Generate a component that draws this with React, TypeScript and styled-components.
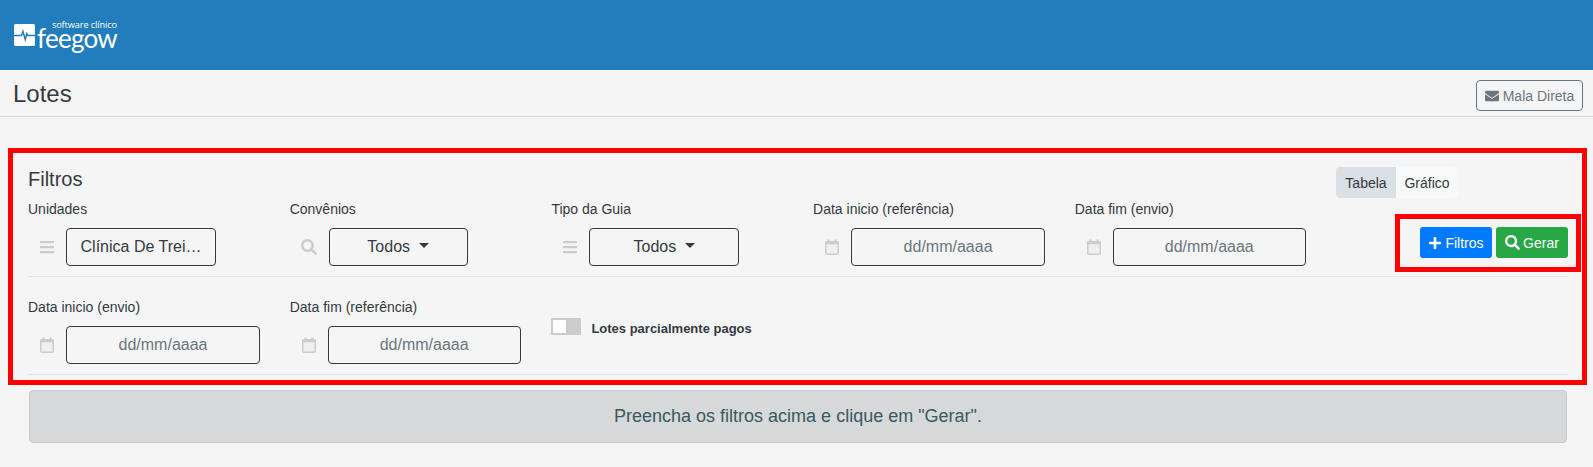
import React from "react";
import styled, { createGlobalStyle } from "styled-components";
import { FaBars, FaSearch, FaPlus, FaEnvelope } from "react-icons/fa";

const Global = createGlobalStyle`
  html, body { margin: 0; padding: 0; background: #f5f5f5; }
  body { font-family: "Liberation Sans", Arial, sans-serif; color: #343a40; overflow: hidden; }
  * { box-sizing: border-box; }
`;

const Page = styled.div`
  position: relative;
  height: 467px;
  background: #f5f5f5;
`;
const TopBar = styled.header`
  height: 70px;
  background: #217dbb;
  display: flex;
  align-items: flex-start;
  padding: 21px 0 0 14px;
`;
const Logo = styled.div`
  display: flex;
  align-items: flex-start;
  gap: 4px;
  color: #fff;
`;
const LogoMarkSlot = styled.div`
  margin-top: 3px;
  line-height: 0;
`;
const LogoWords = styled.div`
  display: flex;
  flex-direction: column;
  align-items: flex-end;
  width: 78px;
`;
const LogoSmall = styled.span`
  font-family: "Open Sans", sans-serif;
  font-size: 9.2px;
  line-height: 8px;
  height: 8px;
  letter-spacing: -0.1px;
  white-space: nowrap;
`;
const LogoBig = styled.span`
  font-family: "Lato", sans-serif;
  font-size: 26px;
  font-weight: 400;
  line-height: 12px;
  height: 12px;
  margin-top: 3px;
  letter-spacing: -0.75px;
  white-space: nowrap;
`;
const TitleBar = styled.div`
  height: 47px;
  border-bottom: 1px solid #dcdcdc;
  display: flex;
  align-items: center;
  justify-content: space-between;
  padding: 0 10px 0 13px;
`;
const Title = styled.h1`
  margin: 2px 0 0;
  font-size: 24px;
  font-weight: 400;
  color: #343a40;
`;
const OutlineButton = styled.button`
  height: 31px;
  width: 107px;
  border: 1px solid #6c757d;
  border-radius: 4px;
  background: transparent;
  color: #6c757d;
  font: 14px "Liberation Sans", Arial, sans-serif;
  display: flex;
  align-items: center;
  justify-content: center;
  gap: 4px;
  padding: 0;
  margin-top: 5px;
`;
const Main = styled.main`
  padding: 50px 25px 0 28px;
`;
const HeadRow = styled.div`
  display: flex;
  justify-content: space-between;
  align-items: flex-start;
  height: 32px;
`;
const Heading = styled.h2`
  margin: 0;
  font-size: 20px;
  line-height: 24px;
  font-weight: 400;
  color: #343a40;
`;
const Tabs = styled.div`
  display: flex;
  margin-right: 110px;
`;
const Tab = styled.div<{ $active?: boolean }>`
  width: ${(p) => (p.$active ? "60px" : "62px")};
  height: 31px;
  display: flex;
  align-items: center;
  justify-content: center;
  font-size: 14px;
  color: #343a40;
  background: ${(p) => (p.$active ? "#dae0e5" : "#f8f9fa")};
  border-radius: ${(p) => (p.$active ? "4px 0 0 4px" : "0 4px 4px 0")};
`;
const FilterRow = styled.div`
  display: flex;
  height: 78px;
  border-bottom: 1px solid #e2e3e8;
  margin-bottom: 20px;
`;
const Field = styled.div`
  width: 261.7px;
  flex: none;
`;
const Label = styled.label`
  display: block;
  font-size: 14px;
  line-height: 21px;
  margin-bottom: 8px;
  color: #343a40;
`;
const Control = styled.div`
  display: flex;
  align-items: center;
`;
const Addon = styled.span`
  width: 38px;
  flex: none;
  display: flex;
  justify-content: center;
  color: #ccc;
  font-size: 16px;
`;
const Box = styled.div<{ $width: number; $muted?: boolean; $shift?: number }>`
  width: ${(p) => p.$width}px;
  margin-left: ${(p) => p.$shift ?? 0}px;
  height: 38px;
  border: 1px solid #343a40;
  border-radius: 4px;
  display: flex;
  align-items: center;
  justify-content: center;
  font-size: 16px;
  color: ${(p) => (p.$muted ? "#6c757d" : "#343a40")};
  white-space: nowrap;
`;
const Caret = styled.span`
  width: 0;
  height: 0;
  margin-left: 9px;
  margin-top: -3px;
  border-top: 5px solid #343a40;
  border-left: 5px solid transparent;
  border-right: 5px solid transparent;
`;
const Actions = styled.div`
  margin-left: auto;
  display: flex;
  gap: 4px;
  padding-top: 28px;
`;
const SolidButton = styled.button<{ $bg: string }>`
  width: 72px;
  height: 31px;
  border: 0;
  border-radius: 3px;
  background: ${(p) => p.$bg};
  color: #fff;
  font: 14px "Liberation Sans", Arial, sans-serif;
  display: flex;
  align-items: center;
  justify-content: center;
  gap: 3px;
  padding: 0;
`;
const ToggleField = styled.div`
  display: flex;
  align-items: flex-start;
  gap: 10px;
  padding-top: 21px;
`;
const Toggle = styled.span`
  width: 30px;
  height: 17px;
  background: #ccc;
  padding: 2px;
  display: block;
`;
const Knob = styled.span`
  display: block;
  width: 13px;
  height: 13px;
  background: #fff;
`;
const ToggleText = styled.span`
  font-size: 13px;
  line-height: 15px;
  margin-top: 3px;
  font-weight: 700;
  color: #343a40;
`;
const Notice = styled.div`
  margin: -5px 1px 0 1px;
  height: 53px;
  background: #d6d8d9;
  border: 1px solid #c6c8ca;
  border-radius: 4px;
  display: flex;
  align-items: center;
  justify-content: center;
  font-size: 18px;
  color: #385a5e;
`;
const Highlight = styled.div<{ $l: number; $t: number; $w: number; $h: number }>`
  position: absolute;
  left: ${(p) => p.$l}px;
  top: ${(p) => p.$t}px;
  width: ${(p) => p.$w}px;
  height: ${(p) => p.$h}px;
  border: 5px solid #ff0000;
  pointer-events: none;
`;

const CalendarIcon = () => (
  <svg width="14" height="16" viewBox="0 0 14 16" aria-hidden="true">
    <rect x="0.75" y="2.75" width="12.5" height="12.5" rx="1" fill="#efefef" stroke="#ccc" strokeWidth="1.5" />
    <rect x="0.75" y="2.75" width="12.5" height="2.5" fill="#ccc" />
    <rect x="2.5" y="0.5" width="2" height="3.5" fill="#ccc" />
    <rect x="9.5" y="0.5" width="2" height="3.5" fill="#ccc" />
  </svg>
);

const DateField = ({ label, width = 194 }: { label: string; width?: number }) => (
  <Field>
    <Label>{label}</Label>
    <Control>
      <Addon><CalendarIcon /></Addon>
      <Box $width={width} $muted>dd/mm/aaaa</Box>
    </Control>
  </Field>
);

const LogoMark = () => (
  <svg width="21" height="22" viewBox="0 0 21 22" aria-hidden="true">
    <rect width="21" height="22" rx="1.5" fill="#fff" />
    <path d="M0 11.5h7.5l1.5-4 2.2 8 1.6-6 1 2H21" fill="none" stroke="#217dbb" strokeWidth="1.5" />
  </svg>
);

export default function App() {
  return (
    <Page>
      <Global />
      <TopBar>
        <Logo>
          <LogoMarkSlot><LogoMark /></LogoMarkSlot>
          <LogoWords>
            <LogoSmall>software clínico</LogoSmall>
            <LogoBig>feegow</LogoBig>
          </LogoWords>
        </Logo>
      </TopBar>
      <TitleBar>
        <Title>Lotes</Title>
        <OutlineButton><FaEnvelope size={14} />Mala Direta</OutlineButton>
      </TitleBar>
      <Main>
        <HeadRow>
          <Heading>Filtros</Heading>
          <Tabs>
            <Tab $active>Tabela</Tab>
            <Tab>Gráfico</Tab>
          </Tabs>
        </HeadRow>
        <FilterRow>
          <Field>
            <Label>Unidades</Label>
            <Control>
              <Addon><FaBars /></Addon>
              <Box $width={150}>Clínica De Trei…</Box>
            </Control>
          </Field>
          <Field>
            <Label>Convênios</Label>
            <Control>
              <Addon><FaSearch /></Addon>
              <Box $width={139} $shift={1}>Todos<Caret /></Box>
            </Control>
          </Field>
          <Field>
            <Label>Tipo da Guia</Label>
            <Control>
              <Addon><FaBars /></Addon>
              <Box $width={150}>Todos<Caret /></Box>
            </Control>
          </Field>
          <DateField label="Data inicio (referência)" />
          <DateField label="Data fim (envio)" width={193} />
          <Actions>
            <SolidButton $bg="#007bff"><FaPlus size={14} />Filtros</SolidButton>
            <SolidButton $bg="#28a745"><FaSearch size={15} />Gerar</SolidButton>
          </Actions>
        </FilterRow>
        <FilterRow>
          <DateField label="Data inicio (envio)" />
          <DateField label="Data fim (referência)" width={193} />
          <ToggleField>
            <Toggle><Knob /></Toggle>
            <ToggleText>Lotes parcialmente pagos</ToggleText>
          </ToggleField>
        </FilterRow>
        <Notice>Preencha os filtros acima e clique em "Gerar".</Notice>
      </Main>
      <Highlight $l={8} $t={148} $w={1579} $h={237} />
      <Highlight $l={1395} $t={214} $w={186} $h={58} />
    </Page>
  );
}
